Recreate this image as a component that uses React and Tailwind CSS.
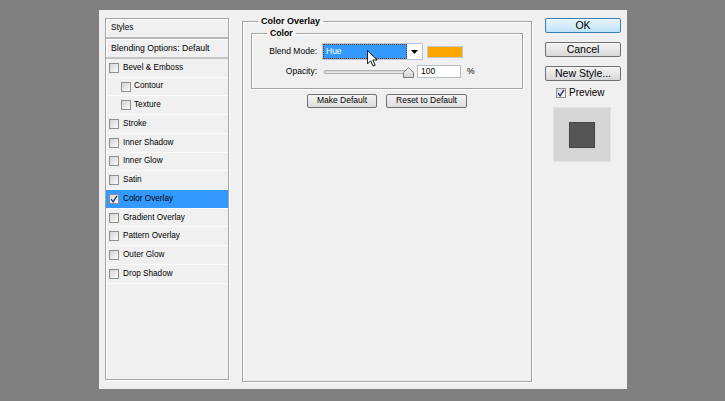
import React from "react";

function Check({ checked }) {
  return (
    <span className="flex h-[10px] w-[10px] shrink-0 items-center justify-center border border-[#8e8f8f] bg-gradient-to-br from-[#d4d4d4] to-[#fbfbfb]">
      {checked && (
        <svg width="8" height="8" viewBox="0 0 8 8">
          <path d="M1.2 4.2 L3.1 6.8 L7 0.8" fill="none" stroke="#1c2f78" strokeWidth="1.3" />
        </svg>
      )}
    </span>
  );
}

const rows = [
  { t: "Bevel & Emboss", i: false },
  { t: "Contour", i: true },
  { t: "Texture", i: true },
  { t: "Stroke", i: false },
  { t: "Inner Shadow", i: false },
  { t: "Inner Glow", i: false },
  { t: "Satin", i: false },
  { t: "Color Overlay", i: false, s: true },
  { t: "Gradient Overlay", i: false },
  { t: "Pattern Overlay", i: false },
  { t: "Outer Glow", i: false },
  { t: "Drop Shadow", i: false },
];

function Btn({ children, w, className = "" }) {
  return (
    <div
      className={`flex h-[14px] items-center justify-center rounded-[2px] border border-[#707070] bg-gradient-to-b from-[#f4f4f4] to-[#dcdcdc] text-[8.5px] leading-none text-[#000] ${w} ${className}`}
    >
      {children}
    </div>
  );
}

function RBtn({ children, ok }) {
  return (
    <div
      className={
        ok
          ? "flex h-[15px] w-[76px] items-center justify-center rounded-[2px] border border-[#3c7fb1] bg-gradient-to-b from-[#eaf6fd] to-[#bfe2f6] text-[10.5px] leading-none text-[#000]"
          : "flex h-[15px] w-[76px] items-center justify-center rounded-[2px] border border-[#707070] bg-gradient-to-b from-[#f4f4f4] to-[#d8d8d8] text-[10.5px] leading-none text-[#000]"
      }
    >
      {children}
    </div>
  );
}

export default function App() {
  return (
    <div className="h-[401px] w-[725px] overflow-hidden bg-[#808080] pl-[99px] pt-[10px] font-['Liberation_Sans',Arial,sans-serif] text-[#000]">
      <div className="flex h-[379px] w-[528px] items-start bg-[#f0f0f0]">
        {/* Left styles list */}
        <div className="ml-[6px] mt-[8px] flex h-[362px] w-[124px] flex-col border border-[#a3a3a3] shadow-[inset_1px_1px_0_#ffffff,1px_1px_0_#ffffff]">
          <div className="flex h-[17.5px] shrink-0 items-center pl-[5px] text-[8.2px] leading-none">Styles</div>
          <div className="h-[2px] shrink-0 bg-[#b9b9b9]" />
          <div className="h-[1px] shrink-0 bg-white" />
          <div className="flex h-[17.5px] shrink-0 items-center pl-[5px] text-[8.7px] leading-none">
            Blending Options: Default
          </div>
          <div className="h-[2px] shrink-0 bg-[#c4c4c4]" />
          {rows.map((r) => (
            <div
              key={r.t}
              className={
                r.s
                  ? "flex h-[18.73px] shrink-0 items-center border-b border-[#fafafa] bg-[#3399ff] text-[8.2px] leading-none"
                  : "flex h-[18.73px] shrink-0 items-center border-b border-[#fafafa] text-[8.2px] leading-none"
              }
            >
              <span className={r.i ? "ml-[15px] flex items-center gap-[3px]" : "ml-[3px] flex items-center gap-[4px]"}>
                <Check checked={r.s} />
                <span>{r.t}</span>
              </span>
            </div>
          ))}
        </div>

        {/* Middle panel */}
        <fieldset className="ml-[13px] mt-[5.5px] h-[366px] w-[290px] shrink-0 border border-[#a3a3a3] shadow-[inset_1px_1px_0_#ffffff,1px_1px_0_#ffffff]">
          <legend className="ml-[15px] px-[3px] text-[9px] font-bold leading-[11px]">Color Overlay</legend>
          <fieldset className="ml-[8px] mt-[1px] h-[61px] w-[272px] border border-[#a3a3a3] shadow-[inset_1px_1px_0_#ffffff,1px_1px_0_#ffffff]">
            <legend className="ml-[15px] px-[3px] text-[8.7px] font-bold leading-[11px]">Color</legend>
            <div className="mt-[4.5px] flex h-[17px] items-center">
              <div className="w-[65px] text-right text-[8.5px] leading-none">Blend Mode:</div>
              <div className="relative ml-[5px] flex h-[17px] w-[101px] border border-[#b9c4d4] bg-white">
                <div className="flex h-[15px] w-[84px] items-center border border-dotted border-[#8a3a10] bg-[#3399ff] pl-[2px] text-[8.5px] leading-none text-white">
                  Hue
                </div>
                <div className="flex flex-1 items-center justify-center">
                  <svg width="7" height="4" viewBox="0 0 7 4">
                    <path d="M0 0 H7 L3.5 4 Z" fill="#000" />
                  </svg>
                </div>
                <svg className="absolute left-[44px] top-[6px]" width="11" height="17" viewBox="0 0 12 19">
                  <path
                    d="M0.5 0.5 L0.5 15.5 L4 12 L6.6 18 L9 17 L6.4 11.2 L11.2 11.2 Z"
                    fill="#fff"
                    stroke="#000"
                    strokeWidth="1"
                    strokeLinejoin="round"
                  />
                </svg>
              </div>
              <div className="ml-[4px] h-[12px] w-[36px] border border-[#c8c8c8] bg-[#fca600]" />
            </div>
            <div className="mt-[5px] flex h-[13px] items-center">
              <div className="w-[65px] text-right text-[8.5px] leading-none">Opacity:</div>
              <div className="relative ml-[7px] flex h-[13px] w-[90px] items-center">
                <div className="h-[4px] w-[88px] rounded-[1px] border border-[#b0b0b0] bg-gradient-to-b from-[#d0d0d0] to-[#ececec]" />
                <svg className="absolute left-[79px] top-[2px]" width="11" height="11" viewBox="0 0 11 11">
                  <defs>
                    <linearGradient id="th" x1="0" y1="0" x2="0" y2="1">
                      <stop offset="0" stopColor="#f8f8f8" />
                      <stop offset="1" stopColor="#d0d0d0" />
                    </linearGradient>
                  </defs>
                  <path d="M0.5 10.5 L0.5 5.5 L5.5 0.8 L10.5 5.5 L10.5 10.5 Z" fill="url(#th)" stroke="#7a7a7a" strokeWidth="1" strokeLinejoin="round" />
                </svg>
              </div>
              <div className="ml-[3px] flex h-[13px] w-[44px] items-center border border-[#b9bcc4] bg-white pl-[3px] text-[8.5px] leading-none">
                100
              </div>
              <div className="ml-[6px] text-[8.5px] leading-none">%</div>
            </div>
          </fieldset>
          <div className="ml-[64px] mt-[5px] flex gap-[9px]">
            <Btn w="w-[70px]">Make Default</Btn>
            <Btn w="w-[81px]">Reset to Default</Btn>
          </div>
        </fieldset>

        {/* Right column */}
        <div className="ml-[13px] mt-[8px] flex w-[76px] shrink-0 flex-col">
          <div className="flex flex-col gap-[9px]">
            <RBtn ok>OK</RBtn>
            <RBtn>Cancel</RBtn>
            <RBtn>New Style...</RBtn>
          </div>
          <div className="ml-[11px] mt-[7px] flex h-[10px] items-center gap-[3px]">
            <Check checked />
            <span className="text-[10px] leading-none">Preview</span>
          </div>
          <div className="ml-[8px] mt-[9px] flex h-[55px] w-[58px] items-center justify-center border border-[#e2e2e2] bg-[#d5d5d5]">
            <div className="h-[26px] w-[26px] border border-[#444] bg-[#555]" />
          </div>
        </div>
      </div>
    </div>
  );
}
